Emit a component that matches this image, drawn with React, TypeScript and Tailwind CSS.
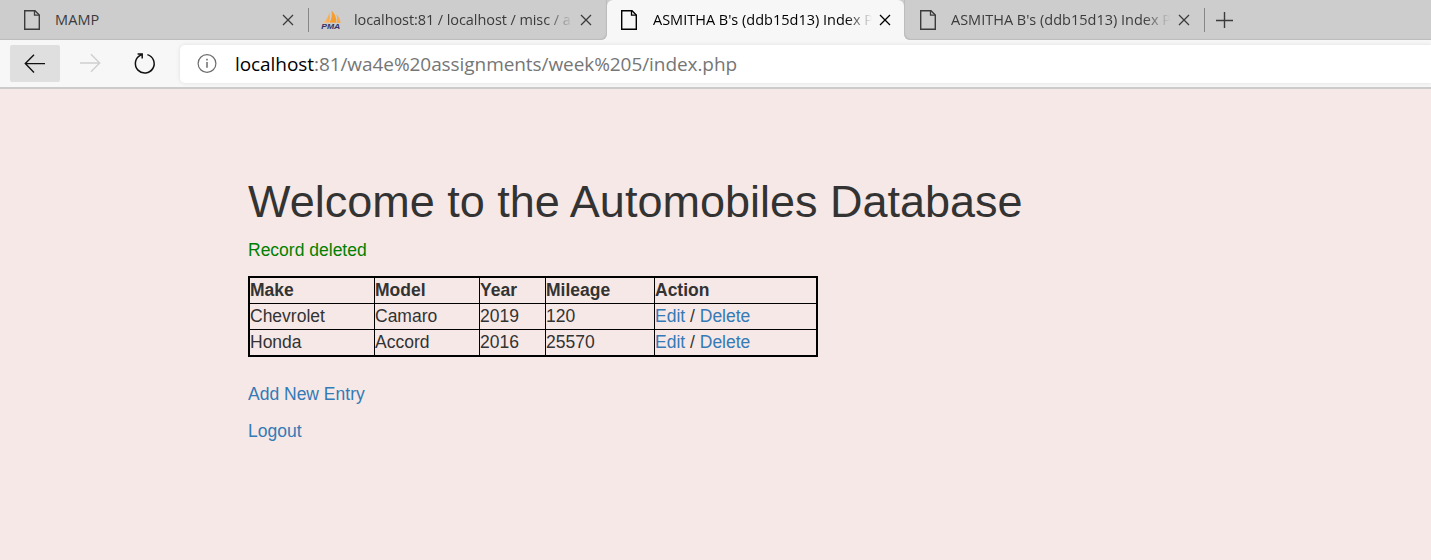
import React from "react";

function PageIcon() {
  return (
    <svg width="18" height="22" viewBox="0 0 18 22" fill="none" stroke="currentColor" strokeWidth="1.4" className="shrink-0">
      <path d="M1.7 1.7H12L16.3 6V20.3H1.7Z" />
      <path d="M11.5 1.7V6.2H16.3" strokeWidth="1.3" />
    </svg>
  );
}

function PmaIcon() {
  return (
    <svg width="20" height="20" viewBox="0 0 20 20" className="shrink-0">
      <defs>
        <linearGradient id="sail" x1="0" x2="1">
          <stop offset="0" stopColor="#fbd09a" />
          <stop offset="1" stopColor="#f9a544" />
        </linearGradient>
      </defs>
      <path d="M8 2.5C8 6.5 5 10.5 0.8 13.2L7.8 12.6C9 9 8.9 5 8 2.5Z" fill="url(#sail)" />
      <path d="M10.5 0.5C14.2 4 15.7 8 15.3 12.8L8.5 12.5C11 8.5 11.3 4.5 10.5 0.5Z" fill="#f89c2c" />
      <path d="M15.4 4.3C18 7 19.3 9.8 19.6 13H15.8C16.4 9.4 16.2 7 15.4 4.3Z" fill="#f9a94a" />
      <text x="0.3" y="19.2" textLength="19" lengthAdjust="spacingAndGlyphs" fontSize="7.8" fontWeight="700" fontStyle="italic" fontFamily="Liberation Sans, sans-serif" fill="#333366">PMA</text>
    </svg>
  );
}

function CloseIcon() {
  return (
    <svg width="12" height="12" viewBox="0 0 12 12" fill="none" stroke="currentColor" strokeWidth="1.3" className="shrink-0">
      <path d="M1 1L11 11M11 1L1 11" />
    </svg>
  );
}

type TabProps = { title: string; width: string; size: string; icon?: React.ReactNode; active?: boolean; fade?: boolean };

function Tab({ title, width, size, icon, active, fade }: TabProps) {
  return (
    <div className={`flex h-10 shrink-0 items-center ${width} ${active ? "rounded-t-[6px] bg-[#f7f7f7] text-black" : "text-[#3b3b3b]"}`}>
      <div className="w-[33px] shrink-0">{icon ?? <PageIcon />}</div>
      <div className={`w-[219px] shrink-0 overflow-hidden whitespace-nowrap font-['Open_Sans','Noto_Sans',sans-serif] leading-5 ${size} ${fade ? "[mask-image:linear-gradient(to_right,black_88%,transparent_100%)]" : ""}`}>{title}</div>
      <div className="ml-[7px]"><CloseIcon /></div>
    </div>
  );
}

const cars = [
  ["Chevrolet", "Camaro", "2019", "120"],
  ["Honda", "Accord", "2016", "25570"],
];

export default function App() {
  return (
    <div className="flex h-[560px] w-[1431px] flex-col overflow-hidden bg-[#f6e8e6]">
      <div className="flex h-10 shrink-0 items-center bg-[linear-gradient(#cdcdcd_50%,#f7f7f7_50%)]">
        <div className="flex h-10 w-[607px] shrink-0 items-center rounded-br-[6px] bg-[#cdcdcd] shadow-[inset_-1px_-1px_1px_#bcbcbc]">
          <Tab title="MAMP" width="w-[308px] pl-[23px]" size="text-[14.5px] -ml-px mr-px tracking-[0.1px]" />
          <div className="h-6 w-px bg-[#868686]" />
          <Tab title="localhost:81 / localhost / misc / a" width="w-[298px] pl-[12px]" size="text-[14.5px] tracking-[-0.08px]" icon={<PmaIcon />} fade />
        </div>
        <Tab title="ASMITHA B's (ddb15d13) Index P" width="w-[297px] pl-[13px]" size="text-[14.5px]" active fade />
        <div className="flex h-10 flex-1 items-center rounded-bl-[6px] bg-[#cdcdcd] shadow-[inset_1px_-1px_1px_#bcbcbc]">
          <Tab title="ASMITHA B's (ddb15d13) Index P" width="w-[300px] pl-[15px]" size="text-[14.5px] -ml-px mr-px" fade />
          <div className="h-6 w-px bg-[#868686]" />
          <svg width="18" height="18" viewBox="0 0 18 18" fill="none" stroke="#3b3b3b" strokeWidth="1.4" className="-mt-px ml-[10px]">
            <path d="M9.5 1V17M1 9.5H18" />
          </svg>
        </div>
      </div>
      <div className="flex h-[49px] shrink-0 items-start border-b-2 border-[#cbcbcb] bg-[#f7f7f7] pt-[5px] pl-[10px]">
        <div className="flex h-[37px] w-[50px] items-center justify-center rounded-[2px] bg-[#dfdfdf]">
          <svg width="22" height="20" viewBox="0 0 22 20" fill="none" stroke="#111" strokeWidth="1.4">
            <path d="M21 9.6H1.5M10 0.8L1.3 9.6L10 18.4" />
          </svg>
        </div>
        <svg width="22" height="20" viewBox="0 0 22 20" fill="none" stroke="#cfcfcf" strokeWidth="1.4" className="mt-2 ml-[19px]">
          <path d="M1 10H20.5M12 1.2L20.7 10L12 18.8" />
        </svg>
        <svg width="24" height="24" viewBox="0 0 24 24" fill="none" stroke="#111" strokeWidth="1.5" className="mt-[6px] ml-[32px]">
          <path d="M14.4 3.6A9.4 9.4 0 1 1 7.2 4.4L9 3.4M4.6 2.9H9.2V7.5" />
        </svg>
        <div className="ml-[23px] flex h-[38px] flex-1 items-center rounded-l-[5px] bg-white pl-[17px] shadow-[0_0_4px_rgba(0,0,0,0.1)]">
          <svg width="20" height="20" viewBox="0 0 20 20" fill="none" stroke="#6c6c6c" strokeWidth="1.2">
            <circle cx="10" cy="9.5" r="8.9" />
            <path d="M10 8V13.8M10 4.8V6.4" strokeWidth="1.5" />
          </svg>
          <div className="ml-[18px] whitespace-nowrap font-['Open_Sans','Noto_Sans',sans-serif] text-[19px] leading-6 tracking-[-0.07px] text-[#767676]">
            <span className="text-black">localhost</span>:81/wa4e%20assignments/week%205/index.php
          </div>
        </div>
      </div>
      <main className="pt-[88px] pl-[248px] font-['Liberation_Sans',Arial,sans-serif] text-[17.5px] leading-[25px] text-[#333]">
        <h1 className="text-[45px] leading-[50px] whitespace-nowrap">Welcome to the Automobiles Database</h1>
        <p className="mt-[11px] text-[#008000]">Record deleted</p>
        <table className="mt-[13px] w-[570px] table-fixed border-separate border-spacing-0 border-2 border-black text-left">
          <colgroup>
            <col className="w-[125px]" />
            <col className="w-[105px]" />
            <col className="w-[66px]" />
            <col className="w-[109px]" />
            <col className="w-[161px]" />
          </colgroup>
          <thead>
            <tr>
              {["Make", "Model", "Year", "Mileage", "Action"].map((h) => (
                <th key={h} className="h-[26px] border-r border-b border-black p-0 font-bold last:border-r-0">{h}</th>
              ))}
            </tr>
          </thead>
          <tbody className="[&>tr:last-child>td]:h-[25px] [&>tr:last-child>td]:border-b-0">
            {cars.map((car) => (
              <tr key={car[0]}>
                {car.map((v) => (
                  <td key={v} className="h-[26px] border-r border-b border-black p-0">{v}</td>
                ))}
                <td className="h-[26px] border-b border-black p-0">
                  <a className="text-[#337ab7]">Edit</a> / <a className="text-[#337ab7]">Delete</a>
                </td>
              </tr>
            ))}
          </tbody>
        </table>
        <p className="mt-[25px]"><a className="text-[#337ab7]">Add New Entry</a></p>
        <p className="mt-3"><a className="text-[#337ab7]">Logout</a></p>
      </main>
    </div>
  );
}
